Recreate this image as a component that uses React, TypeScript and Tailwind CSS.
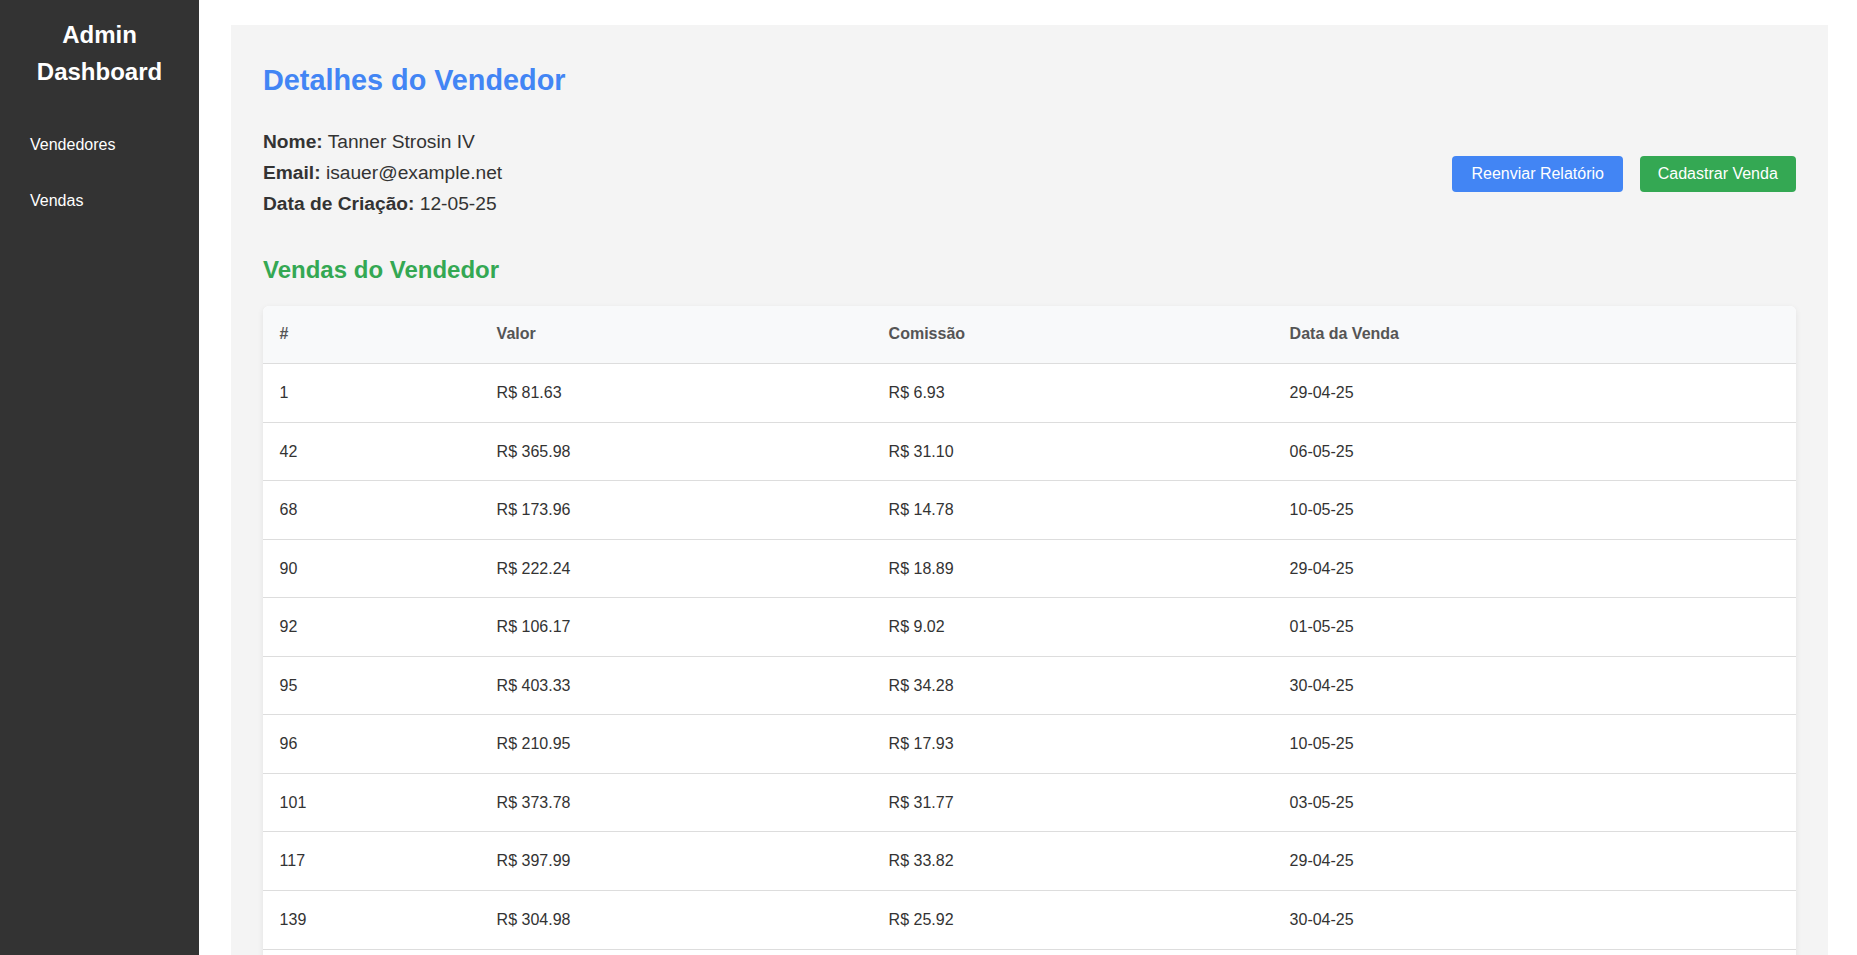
import React from "react";

interface Venda {
  id: number;
  valor: string;
  comissao: string;
  data: string;
}

const vendas: Venda[] = [
  { id: 1, valor: "R$ 81.63", comissao: "R$ 6.93", data: "29-04-25" },
  { id: 42, valor: "R$ 365.98", comissao: "R$ 31.10", data: "06-05-25" },
  { id: 68, valor: "R$ 173.96", comissao: "R$ 14.78", data: "10-05-25" },
  { id: 90, valor: "R$ 222.24", comissao: "R$ 18.89", data: "29-04-25" },
  { id: 92, valor: "R$ 106.17", comissao: "R$ 9.02", data: "01-05-25" },
  { id: 95, valor: "R$ 403.33", comissao: "R$ 34.28", data: "30-04-25" },
  { id: 96, valor: "R$ 210.95", comissao: "R$ 17.93", data: "10-05-25" },
  { id: 101, valor: "R$ 373.78", comissao: "R$ 31.77", data: "03-05-25" },
  { id: 117, valor: "R$ 397.99", comissao: "R$ 33.82", data: "29-04-25" },
  { id: 139, valor: "R$ 304.98", comissao: "R$ 25.92", data: "30-04-25" },
  { id: 152, valor: "R$ 188.40", comissao: "R$ 16.01", data: "05-05-25" },
];

const cols = "grid grid-cols-[217px_392px_401px_1fr]";

function Sidebar() {
  return (
    <aside className="w-[199px] shrink-0 bg-[#333333] text-white">
      <h1 className="pt-[15.6px] text-center text-[24px] font-bold leading-[37.6px]">
        Admin
        <br />
        Dashboard
      </h1>
      <nav className="mt-[26.4px]">
        <a className="block px-[30px] py-[18.8px] text-[16px] leading-[18.4px]" href="#">
          Vendedores
        </a>
        <a className="block px-[30px] py-[18.8px] text-[16px] leading-[18.4px]" href="#">
          Vendas
        </a>
      </nav>
    </aside>
  );
}

export default function App() {
  return (
    <div className="flex h-[955px] overflow-hidden bg-white font-['Liberation_Sans',Arial,sans-serif] text-[#333333]">
      <Sidebar />

      <main className="flex-1 pl-[32px] pr-[29px] pt-[25px]">
        <div className="h-full bg-[#f4f4f4] px-[32px] pt-[38.8px]">
          {/* Seller header */}
          <h2 className="text-[28.8px] font-bold leading-[33px] text-[#4285f4]">
            Detalhes do Vendedor
          </h2>

          <div className="mt-[28.8px] flex items-start justify-between">
            <div className="text-[19.2px] leading-[31px]">
              <p>
                <strong>Nome:</strong> Tanner Strosin IV
              </p>
              <p>
                <strong>Email:</strong> isauer@example.net
              </p>
              <p>
                <strong>Data de Criação:</strong> 12-05-25
              </p>
            </div>
            <div className="mt-[30px] flex gap-[16.6px]">
              <button className="h-[36.7px] rounded-[4px] bg-[#4285f4] px-[19px] text-[16px] text-white">
                Reenviar Relatório
              </button>
              <button className="h-[36.7px] rounded-[4px] bg-[#34a853] px-[18.2px] text-[16px] text-white">
                Cadastrar Venda
              </button>
            </div>
          </div>

          <h3 className="mt-[37.6px] text-[24px] font-bold leading-[27.6px] text-[#34a853]">
            Vendas do Vendedor
          </h3>

          {/* Sales table */}
          <div className="mt-[22.2px] overflow-hidden rounded-[6px] bg-white shadow-[0_2px_6px_rgba(0,0,0,0.08)]">
            <div className={`${cols} border-b border-[#dddddd] bg-[#f8f9fa] text-[16px] font-bold leading-[18px] text-[#555555]`}>
              <div className="px-[16.6px] py-[19.5px]">#</div>
              <div className="px-[16.6px] py-[19.5px]">Valor</div>
              <div className="px-[16.6px] py-[19.5px]">Comissão</div>
              <div className="px-[16.6px] py-[19.5px]">Data da Venda</div>
            </div>
            {vendas.map((v) => (
              <div
                key={v.id}
                className={`${cols} border-b border-[#dddddd] text-[16px] leading-[17.56px]`}
              >
                <div className="px-[16.6px] py-[20px]">{v.id}</div>
                <div className="px-[16.6px] py-[20px]">{v.valor}</div>
                <div className="px-[16.6px] py-[20px]">{v.comissao}</div>
                <div className="px-[16.6px] py-[20px]">{v.data}</div>
              </div>
            ))}
          </div>
        </div>
      </main>
    </div>
  );
}
